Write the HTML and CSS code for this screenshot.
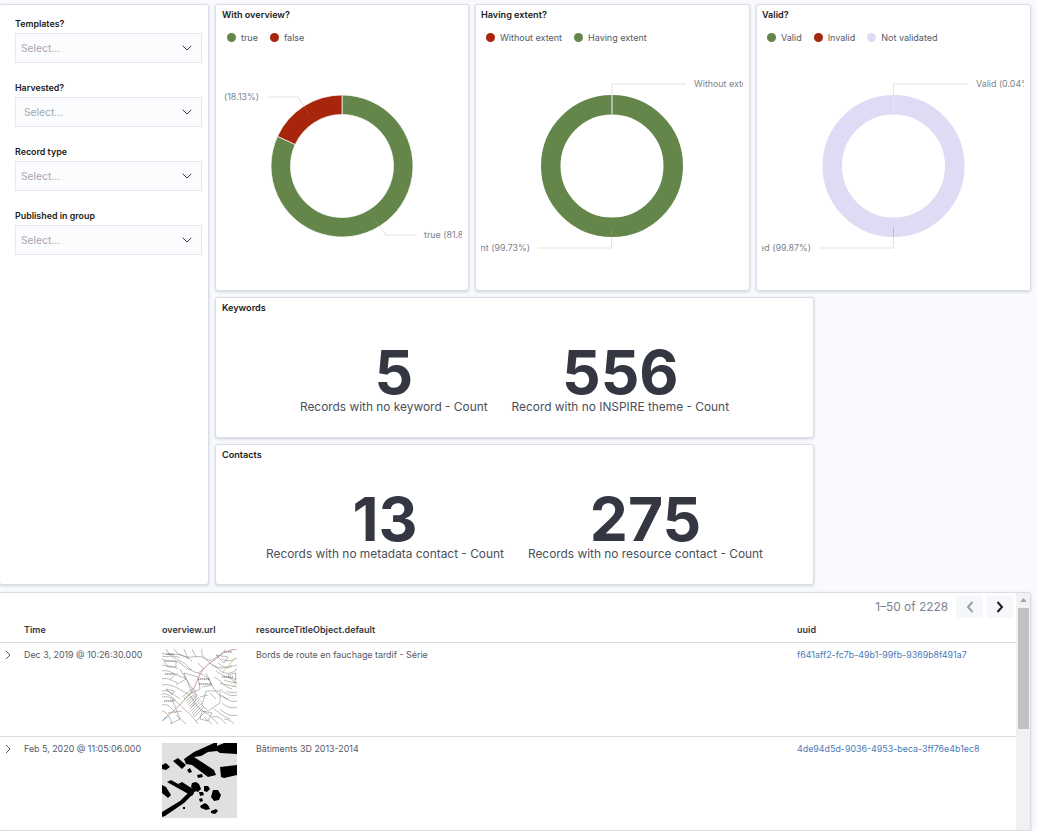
FILE: index.html
```html
<!DOCTYPE html>
<html lang="en">
<head>
<meta charset="utf-8">
<title>Dashboard</title>
<link rel="stylesheet" href="styles.css">
</head>
<body>
<main class="dash">
  <div class="top">
    <section class="panel filters">
      <div class="filter"><label class="filter-label">Templates?</label>
        <div class="select"><span>Select...</span><svg class="chev" viewBox="0 0 10 6"><path d="M.7.8 5 5 9.3.8"/></svg></div></div>
      <div class="filter"><label class="filter-label">Harvested?</label>
        <div class="select shifted"><span>Select...</span><svg class="chev" viewBox="0 0 10 6"><path d="M.7.8 5 5 9.3.8"/></svg></div></div>
      <div class="filter"><label class="filter-label">Record type</label>
        <div class="select"><span>Select...</span><svg class="chev" viewBox="0 0 10 6"><path d="M.7.8 5 5 9.3.8"/></svg></div></div>
      <div class="filter"><label class="filter-label">Published in group</label>
        <div class="select"><span>Select...</span><svg class="chev" viewBox="0 0 10 6"><path d="M.7.8 5 5 9.3.8"/></svg></div></div>
    </section>
    <div class="right">
      <div class="charts">
        <section class="panel chart c1">
          <h2 class="title">With overview?</h2>
          <ul class="legend">
            <li><i class="dot green"></i>true</li>
            <li><i class="dot red"></i>false</li>
          </ul>
          <svg class="plot" width="240" height="220" viewBox="0 0 240 220">
            <path class="s-green" d="M120 35A71 71 0 1 1 55.5 76.3L73.2 84.5A51.5 51.5 0 1 0 120 54.5Z"/>
            <path class="s-red" d="M120 35A71 71 0 0 0 55.5 76.3L73.2 84.5A51.5 51.5 0 0 1 120 54.5Z"/>
            <path class="leader" d="M46 37H76L82 46.500"/>
            <path class="leader" d="M195 175H164L157.600 166"/>
            <path class="faint" d="M82 46.500 87 54M157.600 166 151 157"/>
            <text class="lbl" x="37" y="40" text-anchor="end">false (18.13%)</text>
            <text class="lbl" x="202" y="178">true (81.87%)</text>
          </svg>
        </section>
        <section class="panel chart c2">
          <h2 class="title">Having extent?</h2>
          <ul class="legend">
            <li><i class="dot red"></i>Without extent</li>
            <li><i class="dot green"></i>Having extent</li>
          </ul>
          <svg class="plot" width="262" height="220" viewBox="0 0 262 220">
            <circle class="r-green" cx="131" cy="106" r="61.25"/>
            <path class="leader" d="M205 24H131V54"/>
            <path class="leader" d="M57 188H130.500V177"/>
            <path class="faint" d="M130.500 177V167"/>
            <text class="lbl" x="213" y="27">Without extent (0.27%)</text>
            <text class="lbl" x="49" y="191" text-anchor="end">Having extent (99.73%)</text>
          </svg>
        </section>
        <section class="panel chart c3">
          <h2 class="title">Valid?</h2>
          <ul class="legend">
            <li><i class="dot green"></i>Valid</li>
            <li><i class="dot red"></i>Invalid</li>
            <li><i class="dot lav"></i>Not validated</li>
          </ul>
          <svg class="plot" width="262" height="220" viewBox="0 0 262 220">
            <circle class="r-lav" cx="131.500" cy="106" r="61.25"/>
            <path class="leader" d="M206 24H131.500V54"/>
            <path class="leader" d="M57 188H131.500V177"/>
            <path class="faint-dark" d="M131.500 177V167"/>
            <text class="lbl" x="214" y="27">Valid (0.04%)</text>
            <text class="lbl" x="49" y="191" text-anchor="end">Not validated (99.87%)</text>
          </svg>
        </section>
      </div>
      <section class="panel metrics">
        <h2 class="title">Keywords</h2>
        <div class="metric-row">
          <div class="metric"><div class="num">5</div><div class="cap">Records with no keyword - Count</div></div>
          <div class="metric"><div class="num">556</div><div class="cap">Record with no INSPIRE theme - Count</div></div>
        </div>
      </section>
      <section class="panel metrics">
        <h2 class="title">Contacts</h2>
        <div class="metric-row">
          <div class="metric"><div class="num">13</div><div class="cap">Records with no metadata contact - Count</div></div>
          <div class="metric"><div class="num">275</div><div class="cap">Records with no resource contact - Count</div></div>
        </div>
      </section>
    </div>
  </div>
  <section class="panel docs">
    <div class="docs-main">
      <div class="pager">
        <span class="pager-text">1–50 of 2228</span>
        <span class="pbtn"><svg viewBox="0 0 8 12"><path class="off" d="M6.500 1 2 6l4.500 5"/></svg></span>
        <span class="pbtn"><svg viewBox="0 0 8 12"><path class="on" d="M1.500 1 6 6l-4.500 5"/></svg></span>
      </div>
      <div class="row head">
        <div></div><div>Time</div><div>overview.url</div><div>resourceTitleObject.default</div><div>uuid</div>
      </div>
      <div class="row doc">
        <div><svg class="exp" viewBox="0 0 6 10"><path d="M1 1l4 4-4 4"/></svg></div>
        <div>Dec 3, 2019 @ 10:26:30.000</div>
        <div>
          <svg class="thumb map" viewBox="0 0 75 75">
            <rect width="75" height="75" fill="#fff"/>
            <g fill="none" stroke="#555" stroke-width=".4">
              <path d="M0 4C8 8 14 3 22 7S38 3 46 12 62 20 75 16"/>
              <path d="M4 0C10 12 20 10 26 18S40 22 46 30 52 46 66 50"/>
              <path d="M0 22C8 20 12 26 20 28S26 38 34 42"/>
              <path d="M0 36C10 34 16 40 24 44S32 56 38 60 48 66 56 75"/>
              <path d="M0 48C8 46 14 52 20 58S30 66 36 75"/>
              <path d="M12 0C16 8 24 6 30 12M40 0C38 8 46 14 52 10S60 4 64 0"/>
              <path d="M0 10C6 14 12 10 18 14S26 22 30 20M0 16C6 18 10 16 16 20M0 7C6 9 10 5 18 9"/>
              <path d="M0 30C6 28 10 32 16 34M0 42C6 40 12 46 18 50M0 56C6 54 10 60 14 64M0 62C4 62 8 68 10 75M0 45C6 44 10 48 14 52"/>
              <path d="M50 16C56 18 60 26 68 24S72 20 75 20M56 14C60 18 66 20 70 16M60 10C64 13 70 12 75 9"/>
              <path d="M52 28C58 30 62 38 70 40M54 22C60 26 66 30 75 30M58 34C62 36 68 36 75 38M58 40C62 44 68 48 75 46M60 46C64 50 70 54 75 52M62 31C66 33 70 33 75 34M64 42C67 44 71 44 75 43"/>
              <path d="M60 54C64 58 70 60 75 58M58 60C62 64 68 68 75 66M50 68C56 66 60 70 64 75M62 70C66 70 70 72 72 75M52 60C58 64 62 68 68 70"/>
              <path d="M22 24 30 44 38 40 36 28ZM44 42H58V54L46 62 40 56ZM10 50 18 70 8 75"/>
              <path d="M24 52 34 44M26 56 36 46M28 60 38 50M30 64 40 54M32 68 42 58M34 72 44 62M22 50 32 42M20 48 30 40M25 54 35 45M27 58 37 48M29 62 39 52M31 66 41 56"/>
              <path d="M2 12H14V18H6ZM54 6 66 8 62 14ZM66 26 74 24 73 34ZM4 40 12 42 10 46ZM40 62 50 64 46 72 38 70Z"/>
              <path d="M22 0 26 10M30 0 34 8M18 20 24 30 14 36M36 14 42 20 36 24M44 24 50 36 40 38M6 64 20 62M42 68 50 75M48 44 54 50M14 66 24 75M8 30 16 24M38 48 46 46"/>
            </g>
            <g fill="none" stroke="#555" stroke-width=".9">
              <path d="M36 30H48M37 35H49M3 25H13M2 52H12M60 28H71M4 5H12M62 3H70" stroke-dasharray="1 .5 2 .6"/>
            </g>
            <path d="M2 70C12 62 24 50 30 42S36 22 48 14 60 2 75 0" fill="none" stroke="#c99b9b" stroke-width="1"/>
            <path d="M28 60C33 54 36 48 32 42" fill="none" stroke="#c9a5a5" stroke-width=".7"/>
            <path d="M60 24 73 9M70 38 75 34M22 50 30 44" fill="none" stroke="#9ccb6c" stroke-width=".7"/>
            <path d="M0 72 5 68" fill="none" stroke="#7aa7d8" stroke-width="1"/>
          </svg>
        </div>
        <div>Bords de route en fauchage tardif - Série</div>
        <div><a class="link">f641aff2-fc7b-49b1-99fb-9369b8f491a7</a></div>
      </div>
      <div class="row doc">
        <div><svg class="exp" viewBox="0 0 6 10"><path d="M1 1l4 4-4 4"/></svg></div>
        <div>Feb 5, 2020 @ 11:05:06.000</div>
        <div>
          <svg class="thumb" viewBox="0 0 75 75">
            <rect width="75" height="75" fill="#e0e0de"/>
            <path d="M22 16 32 9 52 0H55V8L46 9 39 13 32 14 52 27 54 32 46 34 30 22 24 21Z"/>
            <path d="M55 3 62 0H75V11L58 10 55 8Z"/>
            <path d="M58 24 75 22V32L62 35 59 34Z"/>
            <path d="M11 18 16 15 24 22 20 26Z"/>
            <path d="M0 22 4 20 8 24 4 27 0 26Z"/>
            <path d="M25 27 28 25 30 29 27 30ZM35 32 40 31 41 34 36 35Z"/>
            <path d="M0 42 4 44 9 52 6 55 0 50Z"/>
            <path d="M5 39 9 37 32 50 30 53Z"/>
            <path d="M16 41 20 39 34 48 31 50Z"/>
            <path d="M0 69 18 58 28 48 32 50 22 60 3 73 0 74Z"/>
            <path d="M30 40 34 39 37 41 39 46 36 49 31 47 29 44Z"/>
            <path d="M42 43 46 43 48 46 45 49 42 48Z"/>
            <path d="M51 47 56 47 59 52 57 57 52 58 49 54Z"/>
            <path d="M37 49 41 49 42 52 38 53ZM37 56 40 55 41 58 38 59Z"/>
            <path d="M38 63 43 60 46 62 48 66 44 67 39 65Z"/>
            <path d="M49 68 54 66 56 68 53 71 49 70ZM21 64 23 64 23 66 21 66Z"/>
          </svg>
        </div>
        <div>Bâtiments 3D 2013-2014</div>
        <div><a class="link">4de94d5d-9036-4953-beca-3ff76e4b1ec8</a></div>
      </div>
    </div>
    <div class="scroll">
      <svg class="scroll-up" viewBox="0 0 8 5"><path d="M4 0 8 5H0Z"/></svg>
      <div class="scroll-thumb"></div>
    </div>
  </section>
</main>
</body>
</html>
```
FILE: styles.css
```css
* { box-sizing: border-box; }
html, body { margin: 0; height: 100%; }
body {
  background: #f9fafd;
  font-family: Inter, "Liberation Sans", sans-serif;
  color: #343741;
  overflow: hidden;
}
.dash {
  display: flex;
  flex-direction: column;
  gap: 7px;
  padding-top: 4px;
  height: 831px;
}
.top { display: flex; gap: 6px; height: 581px; }
.panel {
  background: #fff;
  border: 1px solid #d9dde8;
  border-radius: 3px;
  box-shadow: 0 1px 3px rgba(152, 162, 179, .45);
}
.filters {
  width: 210px;
  margin-left: -1px;
  padding: 12px 6px 0 15px;
  display: flex;
  flex-direction: column;
  gap: 18px;
}
.filter { display: flex; flex-direction: column; gap: 3px; }
.filter-label {
  font-size: 8.900px;
  font-weight: 600;
  line-height: 13px;
  color: #1a1c21;
}
.select {
  height: 30px;
  background: #fbfcfd;
  border: 1px solid #e6e9f2;
  display: flex;
  align-items: center;
  justify-content: space-between;
  padding: 0 9.500px 0 5px;
  font-size: 10.300px;
  color: #a2a8b3;
}
.shifted { padding-left: 8px; }
.chev { width: 10px; height: 6px; }
.chev path { fill: none; stroke: #343741; stroke-width: 1; }
.right { display: flex; flex-direction: column; gap: 6px; width: 816px; }
.charts { display: flex; gap: 6px; height: 288px; }
.chart {
  padding: 3px 5px 0 6px;
  display: flex;
  flex-direction: column;
  overflow: hidden;
}
.c1 { width: 254px; }
.c2, .c3 { width: 275px; padding-left: 5px; }
.title {
  margin: 0;
  font-size: 9.100px;
  font-weight: 600;
  line-height: 13px;
  color: #1a1c21;
}
.legend {
  list-style: none;
  margin: 10px 0 0;
  padding: 0 0 0 5px;
  display: flex;
  gap: 12px;
  height: 13px;
  font-size: 9px;
  line-height: 13px;
  color: #535966;
}
.legend li { display: flex; align-items: center; gap: 5px; }
.dot { width: 9px; height: 9px; border-radius: 50%; }
.green { background: #65864a; }
.red { background: #a6250b; }
.lav { background: #dedcf5; }
.plot { display: block; margin-top: 16px; flex: none; }
.s-green { fill: #65864a; stroke: #fff; stroke-width: .7; }
.s-red { fill: #a6250b; stroke: #fff; stroke-width: .7; }
.r-green { fill: none; stroke: #65864a; stroke-width: 19.500; }
.r-lav { fill: none; stroke: #dedcf5; stroke-width: 19.500; }
.leader { fill: none; stroke: #e4e4e4; stroke-width: 1.200; }
.faint { fill: none; stroke: rgba(255, 255, 255, .1); stroke-width: 1; }
.faint-dark { fill: none; stroke: rgba(90, 90, 110, .25); stroke-width: 1; }
.lbl { font-size: 8.900px; fill: #7c828d; font-family: Inter, "Liberation Sans", sans-serif; }
.metrics {
  width: 599px;
  height: 141px;
  padding: 3px 6px 0;
  display: flex;
  flex-direction: column;
}
.metric-row {
  display: flex;
  justify-content: center;
  gap: 24px;
  margin-top: 31px;
}
.metric { display: flex; flex-direction: column; align-items: center; }
.num {
  font-size: 60.500px;
  font-weight: 700;
  line-height: 55px;
  color: #343741;
}
.cap { font-size: 11.900px; line-height: 14px; color: #4a4f5c; }
.docs {
  margin-left: -1px;
  width: 1032px;
  height: 260px;
  display: flex;
  overflow: hidden;
}
.docs-main { width: 1016px; flex: none; }
.pager {
  height: 26px;
  padding: 3px 3px 0 0;
  display: flex;
  justify-content: flex-end;
  align-items: flex-start;
  gap: 3px;
}
.pager-text {
  font-size: 11.900px;
  line-height: 22px;
  color: #7c828d;
  margin-right: 5px;
}
.pbtn {
  width: 27px;
  height: 22px;
  background: #f5f7fb;
  border-radius: 3px;
  display: flex;
  align-items: center;
  justify-content: center;
}
.pbtn svg { width: 8px; height: 12px; }
.pbtn path { fill: none; stroke-width: 2; }
.off { stroke: #9a9fa8; }
.on { stroke: #1a1c21; }
.row {
  display: grid;
  grid-template-columns: 24px 138px 94px 541px 1fr;
  border-bottom: 1px solid #d9dbe4;
  font-size: 8.900px;
  line-height: 13px;
  color: #535966;
}
.head {
  height: 24px;
  padding-bottom: 2px;
  font-size: 9px;
  font-weight: 600;
  color: #343741;
  align-items: center;
}
.doc { height: 94px; padding-top: 5px; }
.exp { display: block; width: 6px; height: 10px; margin: 2px 0 0 5px; }
.exp path { fill: none; stroke: #535966; stroke-width: 1; }
.thumb { display: block; width: 75px; height: 75px; margin-top: 1px; }
.map { filter: blur(.25px); }
.link { color: #4a7ab8; }
.scroll {
  flex: 1;
  background: #f1f1f1;
  position: relative;
  padding: 15px 1px 0 2px;
}
.scroll-up { position: absolute; top: 5px; left: 4px; width: 7px; height: 4px; fill: #a3a3a3; }
.scroll-thumb { height: 121px; background: #c1c1c1; }
```
